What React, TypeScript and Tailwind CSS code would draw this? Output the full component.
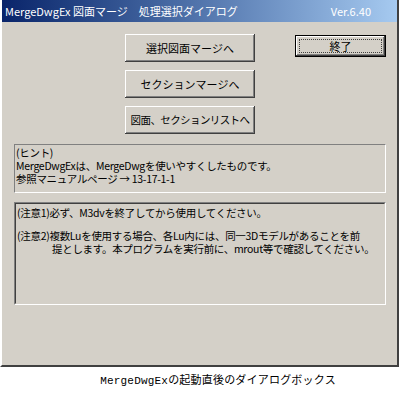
export default function App() {
  const jp = { fontFamily: '"Noto Sans CJK JP", "Noto Sans", sans-serif' };

  return (
    <div className="w-[400px] h-[396px] bg-white overflow-hidden" style={jp}>
      {/* dialog window */}
      <div className="w-[399px] h-[367px] bg-[#d4d0c8] border-l-2 border-l-white border-r-2 border-r-[#404040] border-b-2 border-b-[#404040] flex flex-col">
        {/* title bar */}
        <div className="h-[22px] flex items-center justify-between pl-[3px] pr-[26px] bg-gradient-to-r from-[#0a246a] to-[#a6caf0] text-white text-[11px] leading-none whitespace-nowrap">
          <span>MergeDwgEx 図面マージ　処理選択ダイアログ</span>
          <span>Ver.6.40</span>
        </div>

        <div className="flex flex-col pl-[12px] pt-[12px] text-[10.5px] text-black whitespace-nowrap">
          <div className="flex items-start">
            <div className="ml-[111px] flex flex-col gap-[8px]">
              <button className="w-[130px] h-[28px] bg-[#d4d0c8] shadow-[inset_-1px_-1px_#404040,inset_1px_1px_#fff,inset_-2px_-2px_#808080] text-[11px]">
                選択図面マージへ
              </button>
              <button className="w-[130px] h-[28px] bg-[#d4d0c8] shadow-[inset_-1px_-1px_#404040,inset_1px_1px_#fff,inset_-2px_-2px_#808080] text-[11px]">
                セクションマージへ
              </button>
              <button className="w-[130px] h-[28px] bg-[#d4d0c8] shadow-[inset_-1px_-1px_#404040,inset_1px_1px_#fff,inset_-2px_-2px_#808080] text-[10.5px] tracking-[-0.6px]">
                図面、セクションリストへ
              </button>
            </div>
            <button className="ml-[40px] mt-[1px] w-[91px] h-[22px] border border-black bg-[#d4d0c8] shadow-[inset_-1px_-1px_#404040,inset_1px_1px_#fff,inset_-2px_-2px_#808080] p-[3px] text-[11px]">
              <div className="h-full w-full border border-dotted border-[#404040] flex items-center justify-center leading-none">
                終了
              </div>
            </button>
          </div>

          {/* hint box */}
          <div className="mt-[10px] w-[372px] h-[49px] border border-t-[#808080] border-l-[#808080] border-b-white border-r-white px-[1px] pt-[1px] leading-[13px] tracking-[-0.3px]">
            <div>(ヒント)</div>
            <div>MergeDwgExは、MergeDwgを使いやすくしたものです。</div>
            <div>参照マニュアルページ → 13-17-1-1</div>
          </div>

          {/* notes box */}
          <div className="mt-[9px] w-[372px] h-[103px] border border-t-[#808080] border-l-[#808080] border-b-white border-r-white">
            <div className="h-full border border-t-[#404040] border-l-[#404040] border-b-[#d4d0c8] border-r-[#d4d0c8] px-[1px] pt-[3px] leading-[12px] tracking-[-0.3px]">
              <div>(注意1)必ず、M3dvを終了してから使用してください。</div>
              <div className="h-[11px]" />
              <div>(注意2)複数Luを使用する場合、各Lu内には、同一3Dモデルがあることを前</div>
              <div className="pl-[35px] mt-[1px]">提とします。本プログラムを実行前に、mrout等で確認してください。</div>
            </div>
          </div>
        </div>
      </div>

      {/* caption */}
      <div className="h-[29px] flex items-center justify-center pl-[36px]">
        <span
          className="text-[11px] text-black tracking-[0.2px]"
          style={{ fontFamily: '"Liberation Mono", "Noto Sans CJK JP", monospace' }}
        >
          MergeDwgExの起動直後のダイアログボックス
        </span>
      </div>
    </div>
  );
}
